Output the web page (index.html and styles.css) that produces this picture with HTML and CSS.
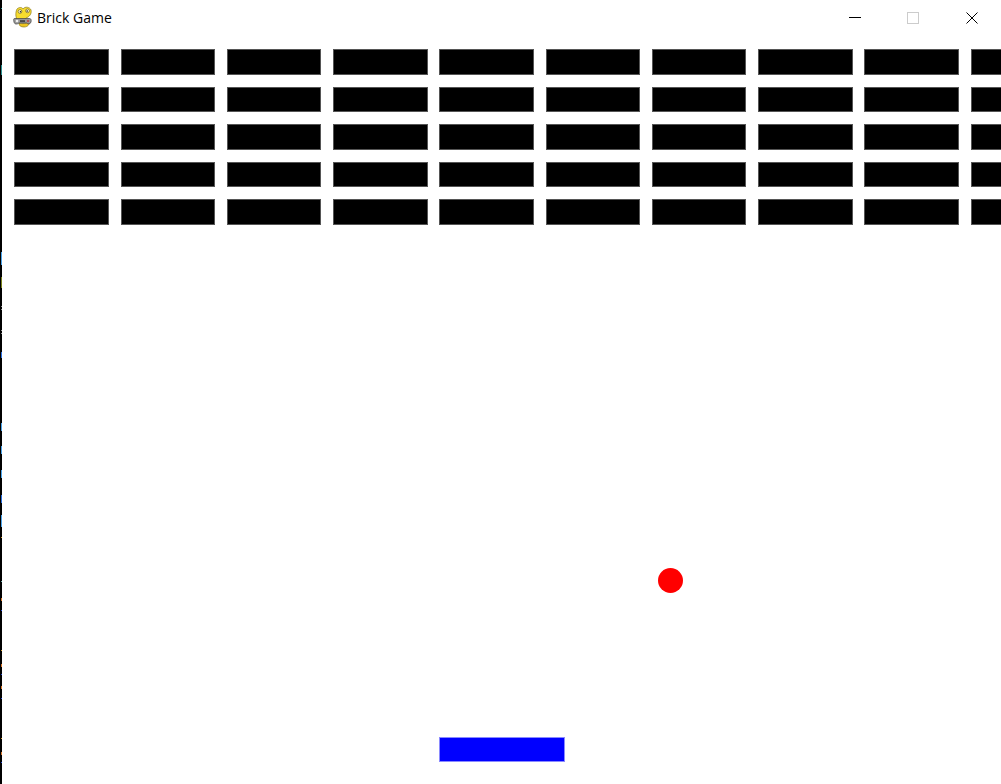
FILE: index.html
```html
<!DOCTYPE html>
<html lang="en">
<head>
<meta charset="utf-8">
<title>Brick Game</title>
<link rel="stylesheet" href="styles.css">
</head>
<body>
<div class="desktop-edge"></div>
<main class="window">
  <header class="titlebar">
    <svg class="app-icon" width="20" height="22" viewBox="0 0 20 22" aria-hidden="true">
      <path d="M4 14 C2 9 3 5 4 3 C6 1 9 1 10 3 C12 0 17 1 18 4 C19 8 16 11 13 12 C12 15 8 15 4 14Z" fill="#f7dc2e" stroke="#8c7a1e" stroke-width=".7"/>
      <path d="M6 17 C9 18 14 18 16 15 C17 18 15 21 11 21 C8 21 6 20 6 17Z" fill="#eec51f" stroke="#8c7a1e" stroke-width=".7"/>
      <circle cx="7" cy="5.500" r="1.900" fill="#fff8c8" stroke="#5b4f10" stroke-width=".6"/>
      <circle cx="14.500" cy="4.800" r="1.900" fill="#fff8c8" stroke="#5b4f10" stroke-width=".6"/>
      <circle cx="7.500" cy="5.700" r=".8" fill="#222"/>
      <circle cx="14.200" cy="5" r=".8" fill="#222"/>
      <path d="M1.500 12.500 H16.500 C18 12.500 18.500 14 18 16 C17.500 18 15 18.500 13.500 17 H6 C4 18.500 1.500 18.500 1 16 C.5 14 .5 12.500 1.500 12.500Z" fill="#9a9a9a" stroke="#3e3e3e" stroke-width=".7"/>
      <circle cx="4" cy="15" r="1.300" fill="#f1f1f1"/>
      <circle cx="15" cy="15" r="1.200" fill="#b45252"/>
      <rect x="7" y="14.300" width="5" height="1.500" fill="#333"/>
    </svg>
    <span class="title">Brick Game</span>
    <div class="controls">
      <span class="control"><svg width="12" height="12" viewBox="0 0 12 12"><path d="M0 5.500H12" stroke="#000"/></svg></span>
      <span class="control"><svg width="12" height="12" viewBox="0 0 12 12"><rect x=".5" y=".5" width="11" height="11" fill="none" stroke="#ccc"/></svg></span>
      <span class="control"><svg width="12" height="12" viewBox="0 0 12 12"><path d="M.5 .5L11.500 11.500M11.500 .5L.5 11.500" stroke="#000"/></svg></span>
    </div>
  </header>
  <section class="field">
    <div class="wall">
      <i class="brick"></i><i class="brick"></i><i class="brick"></i><i class="brick"></i><i class="brick"></i><i class="brick"></i><i class="brick"></i><i class="brick"></i><i class="brick"></i><i class="brick"></i>
      <i class="brick"></i><i class="brick"></i><i class="brick"></i><i class="brick"></i><i class="brick"></i><i class="brick"></i><i class="brick"></i><i class="brick"></i><i class="brick"></i><i class="brick"></i>
      <i class="brick"></i><i class="brick"></i><i class="brick"></i><i class="brick"></i><i class="brick"></i><i class="brick"></i><i class="brick"></i><i class="brick"></i><i class="brick"></i><i class="brick"></i>
      <i class="brick"></i><i class="brick"></i><i class="brick"></i><i class="brick"></i><i class="brick"></i><i class="brick"></i><i class="brick"></i><i class="brick"></i><i class="brick"></i><i class="brick"></i>
      <i class="brick"></i><i class="brick"></i><i class="brick"></i><i class="brick"></i><i class="brick"></i><i class="brick"></i><i class="brick"></i><i class="brick"></i><i class="brick"></i><i class="brick"></i>
    </div>
    <div class="ball"></div>
    <div class="paddle"></div>
  </section>
</main>
</body>
</html>
```
FILE: styles.css
```css
html, body {
  margin: 0;
  height: 100%;
  overflow: hidden;
  background: #fff;
}

body {
  display: flex;
  font-family: "Open Sans", "Liberation Sans", sans-serif;
}

.desktop-edge {
  flex: 0 0 2px;
  background-color: #000;
  background-image: linear-gradient(to bottom,
    #000 8px, #2a8f8f 8px, #2a8f8f 9px, #000 9px,
    #000 65px, #2a8f8f 65px, #2a8f8f 75px, #000 75px,
    #000 252px, #4aa3ea 252px, #4aa3ea 265px, #000 265px,
    #000 277px, #77801a 277px, #77801a 288px, #000 288px,
    #000 306px, #999 306px, #999 307px, #000 307px,
    #000 309px, #999 309px, #999 310px, #000 310px,
    #000 330px, #999 330px, #999 331px, #000 331px,
    #000 333px, #999 333px, #999 334px, #000 334px,
    #000 352px, #2a6fe0 352px, #2a6fe0 358px, #000 358px,
    #000 423px, #4aa3ea 423px, #4aa3ea 431px, #000 431px,
    #000 446px, #4aa3ea 446px, #4aa3ea 454px, #000 454px,
    #000 470px, #4aa3ea 470px, #4aa3ea 478px, #000 478px,
    #000 495px, #2a6fe0 495px, #2a6fe0 503px, #000 503px,
    #000 515px, #4aa3ea 515px, #4aa3ea 527px, #000 527px,
    #000 537px, #d9a033 537px, #d9a033 538px, #000 538px,
    #000 581px, #6fb5b5 581px, #6fb5b5 582px, #000 582px,
    #000 598px, #d9772b 598px, #d9772b 601px, #000 601px,
    #000 610px, #2a4fe0 610px, #2a4fe0 611px, #000 611px,
    #000 650px, #d9a033 650px, #d9a033 651px, #000 651px,
    #000 664px, #d9772b 664px, #d9772b 667px, #000 667px,
    #000 674px, #2a4fe0 674px, #2a4fe0 675px, #000 675px,
    #000 686px, #d9772b 686px, #d9772b 689px, #000 689px,
    #000 698px, #2a4fe0 698px, #2a4fe0 699px, #000 699px,
    #000 738px, #d9a033 738px, #d9a033 739px, #000 739px,
    #000 752px, #d9772b 752px, #d9772b 755px, #000 755px,
    #000 762px, #2a4fe0 762px, #2a4fe0 763px, #000 763px);
  background-size: 1px 100%;
  background-position: right top;
  background-repeat: no-repeat;
}

.window {
  flex: 1;
  min-width: 0;
  display: flex;
  flex-direction: column;
}

.titlebar {
  flex: 0 0 36px;
  display: flex;
  align-items: center;
  padding-left: 11px;
  gap: 4px;
}

.app-icon {
  flex: none;
  margin-top: -2px;
}

.title {
  font-size: 14px;
  color: #000;
  line-height: 20px;
}

.controls {
  margin-left: auto;
  display: flex;
}

.control {
  width: 58.500px;
  height: 36px;
  display: flex;
  align-items: center;
  justify-content: center;
}

.field {
  position: relative;
  flex: 1;
  overflow: hidden;
  padding: 13px 0 0 12.300px;
}

.wall {
  display: grid;
  grid-template-columns: repeat(10, 94.500px);
  grid-auto-rows: 25.500px;
  gap: 12px 11.750px;
  width: 1100px;
}

.brick {
  display: block;
  box-sizing: border-box;
  background: #000;
  border: 1px solid #555;
}

.ball {
  position: absolute;
  left: 656px;
  top: 532px;
  width: 25px;
  height: 25px;
  border-radius: 50%;
  background: #f00;
}

.paddle {
  position: absolute;
  left: 437px;
  top: 701px;
  width: 126px;
  height: 25px;
  box-sizing: border-box;
  background: #00f;
  border: 1px solid #8a8aff;
}
```
